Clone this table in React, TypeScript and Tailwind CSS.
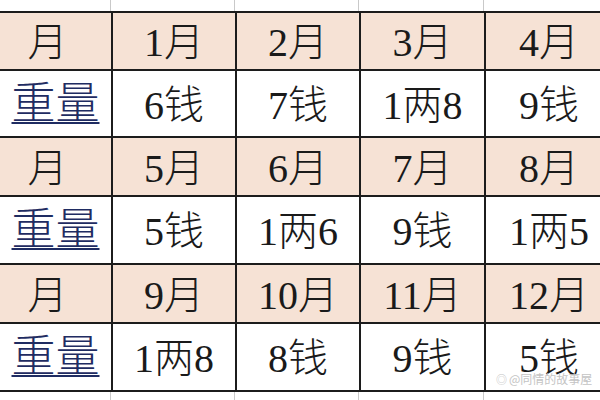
import React from "react";

type Row = { kind: "month" | "weight"; cells: string[] };

const rows: Row[] = [
  { kind: "month", cells: ["月", "1月", "2月", "3月", "4月"] },
  { kind: "weight", cells: ["重量", "6钱", "7钱", "1两8", "9钱"] },
  { kind: "month", cells: ["月", "5月", "6月", "7月", "8月"] },
  { kind: "weight", cells: ["重量", "5钱", "1两6", "9钱", "1两5"] },
  { kind: "month", cells: ["月", "9月", "10月", "11月", "12月"] },
  { kind: "weight", cells: ["重量", "1两8", "8钱", "9钱", "5钱"] },
];

const font = {
  fontFamily: '"Liberation Serif", "Noto Sans CJK SC", serif',
};

// thin grey grid lines seen above and below the table
const Strip = ({ h }: { h: string }) => (
  <div className={`grid grid-cols-[111px_124px_124px_125px_126px] ${h}`}>
    <div className="border-r border-[#c9c9c9]" />
    <div className="border-r border-[#c9c9c9]" />
    <div className="border-r border-[#c9c9c9]" />
    <div className="border-r border-[#c9c9c9]" />
    <div />
  </div>
);

const App = () => {
  return (
    <div className="relative h-[400px] w-[600px] overflow-hidden bg-white" style={font}>
      <Strip h="h-[11px]" />
      <div className="grid w-[612px] grid-cols-[111px_122px_122px_123px_126px] grid-rows-[56px_65px_57px_66px_57px_66px] gap-[2px] bg-[#1c1c1c] py-[2px]">
        {rows.map((row, ri) =>
          row.cells.map((c, ci) => {
            const bg = row.kind === "month" ? "bg-[#f6e2d5]" : "bg-white";
            if (ci === 0 && row.kind === "weight") {
              return (
                <div key={`${ri}-${ci}`} className={`flex items-center justify-center pt-[2px] ${bg}`}>
                  <span className="text-[44px] font-light leading-none text-[#1f2c62] underline decoration-[2px] underline-offset-[3px]">
                    {c}
                  </span>
                </div>
              );
            }
            return (
              <div
                key={`${ri}-${ci}`}
                className={`flex items-center justify-center pt-[4px] text-[40px] font-light leading-none text-[#1a1a1a] ${bg} ${ci === 0 ? "pr-[16px]" : ""}`}
              >
                {c}
              </div>
            );
          })
        )}
      </div>
      <Strip h="h-[10px]" />
      <div
        className="absolute left-[496px] top-[373px] flex items-center gap-[2px] whitespace-nowrap text-[12px] leading-none text-[#c4c4c4]"
        style={{ fontFamily: '"Noto Sans CJK SC", sans-serif' }}
      >
        <span className="text-[11px]">◎</span>
        <span>@同情的故事屋</span>
      </div>
    </div>
  );
};

export default App;
